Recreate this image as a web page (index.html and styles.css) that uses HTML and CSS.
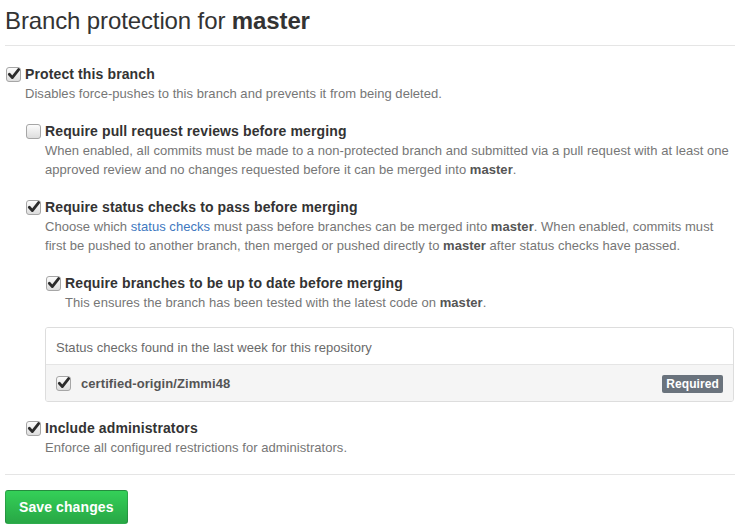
FILE: index.html
```html
<!DOCTYPE html>
<html>
<head>
<meta charset="utf-8">
<link rel="stylesheet" href="styles.css">
</head>
<body>
<div class="page">
  <h2 class="subhead">Branch protection for <strong>master</strong></h2>

  <div class="opt first">
    <span class="cb on"><svg viewBox="0 0 15 15" width="15" height="15"><defs><linearGradient id="g1" x1="0" y1="0" x2="0" y2="1"><stop offset="0" stop-color="#fdfdfd"/><stop offset="1" stop-color="#dcdcdc"/></linearGradient></defs><rect x="0.5" y="0.5" width="14" height="14" rx="2.5" fill="url(#g1)" stroke="#a6a6a6"/><path d="M3.3 7.2 L6.3 10.6 L12.6 2.6" fill="none" stroke="#2b2b2b" stroke-width="2.8" stroke-linecap="round" stroke-linejoin="round"/></svg></span>
    <span class="label">Protect this branch</span>
    <p class="note">Disables force-pushes to this branch and prevents it from being deleted.</p>
  </div>

  <div class="opt l1 g18">
    <span class="cb"><svg viewBox="0 0 15 15" width="15" height="15"><defs><linearGradient id="g2" x1="0" y1="0" x2="0" y2="1"><stop offset="0" stop-color="#fdfdfd"/><stop offset="1" stop-color="#dcdcdc"/></linearGradient></defs><rect x="0.5" y="0.5" width="14" height="14" rx="2.5" fill="url(#g2)" stroke="#a6a6a6"/></svg></span>
    <span class="label">Require pull request reviews before merging</span>
    <p class="note">When enabled, all commits must be made to a non-protected branch and submitted via a pull request with at least one approved review and no changes requested before it can be merged into <strong>master</strong>.</p>
  </div>

  <div class="opt l1 g18">
    <span class="cb on"><svg viewBox="0 0 15 15" width="15" height="15"><defs><linearGradient id="g3" x1="0" y1="0" x2="0" y2="1"><stop offset="0" stop-color="#fdfdfd"/><stop offset="1" stop-color="#dcdcdc"/></linearGradient></defs><rect x="0.5" y="0.5" width="14" height="14" rx="2.5" fill="url(#g3)" stroke="#a6a6a6"/><path d="M3.3 7.2 L6.3 10.6 L12.6 2.6" fill="none" stroke="#2b2b2b" stroke-width="2.8" stroke-linecap="round" stroke-linejoin="round"/></svg></span>
    <span class="label">Require status checks to pass before merging</span>
    <p class="note">Choose which <a href="#" class="link">status checks</a> must pass before branches can be merged into <strong>master</strong>. When enabled, commits must first be pushed to another branch, then merged or pushed directly to <strong>master</strong> after status checks have passed.</p>
  </div>

  <div class="opt l2 g18">
    <span class="cb on"><svg viewBox="0 0 15 15" width="15" height="15"><defs><linearGradient id="g4" x1="0" y1="0" x2="0" y2="1"><stop offset="0" stop-color="#fdfdfd"/><stop offset="1" stop-color="#dcdcdc"/></linearGradient></defs><rect x="0.5" y="0.5" width="14" height="14" rx="2.5" fill="url(#g4)" stroke="#a6a6a6"/><path d="M3.3 7.2 L6.3 10.6 L12.6 2.6" fill="none" stroke="#2b2b2b" stroke-width="2.8" stroke-linecap="round" stroke-linejoin="round"/></svg></span>
    <span class="label">Require branches to be up to date before merging</span>
    <p class="note">This ensures the branch has been tested with the latest code on <strong>master</strong>.</p>
  </div>

  <div class="checks">
    <div class="checks-head">Status checks found in the last week for this repository</div>
    <div class="checks-row">
      <span class="cb on"><svg viewBox="0 0 15 15" width="15" height="15"><defs><linearGradient id="g5" x1="0" y1="0" x2="0" y2="1"><stop offset="0" stop-color="#fdfdfd"/><stop offset="1" stop-color="#dcdcdc"/></linearGradient></defs><rect x="0.5" y="0.5" width="14" height="14" rx="2.5" fill="url(#g5)" stroke="#a6a6a6"/><path d="M3.3 7.2 L6.3 10.6 L12.6 2.6" fill="none" stroke="#2b2b2b" stroke-width="2.8" stroke-linecap="round" stroke-linejoin="round"/></svg></span>
      <span class="check-name">certified-origin/Zimmi48</span>
      <span class="badge">Required</span>
    </div>
  </div>

  <div class="opt l1 g16">
    <span class="cb on"><svg viewBox="0 0 15 15" width="15" height="15"><defs><linearGradient id="g6" x1="0" y1="0" x2="0" y2="1"><stop offset="0" stop-color="#fdfdfd"/><stop offset="1" stop-color="#dcdcdc"/></linearGradient></defs><rect x="0.5" y="0.5" width="14" height="14" rx="2.5" fill="url(#g6)" stroke="#a6a6a6"/><path d="M3.3 7.2 L6.3 10.6 L12.6 2.6" fill="none" stroke="#2b2b2b" stroke-width="2.8" stroke-linecap="round" stroke-linejoin="round"/></svg></span>
    <span class="label">Include administrators</span>
    <p class="note">Enforce all configured restrictions for administrators.</p>
  </div>

  <hr class="rule">

  <button class="btn-save" type="button">Save changes</button>
</div>
</body>
</html>
```

FILE: styles.css
```css
* { box-sizing: border-box; }

html, body {
  margin: 0;
  padding: 0;
  background: #fff;
}

body {
  font-family: "Liberation Sans", Arial, Helvetica, sans-serif;
  font-size: 13px;
  color: #333;
}

.page {
  width: 735px;
  padding-left: 5px;
}

.subhead {
  margin: 0;
  padding-top: 6px;
  padding-bottom: 9px;
  font-size: 24px;
  line-height: 30px;
  font-weight: normal;
  letter-spacing: -0.12px;
  color: #333;
  border-bottom: 1px solid #e5e5e5;
}

.subhead strong {
  font-weight: bold;
}

.opt {
  display: grid;
  grid-template-columns: 20px 1fr;
  grid-template-rows: 20px auto;
}

.opt.first { margin-top: 18px; }
.opt.l1 { margin-left: 20px; }
.opt.l2 { margin-left: 40px; }
.g16 { margin-top: 16px; }
.g17 { margin-top: 17px; }
.g18 { margin-top: 18px; }

.cb {
  display: flex;
  align-items: center;
  height: 20px;
  margin-left: 1px;
}

.cb svg { display: block; }

.label {
  font-size: 14px;
  font-weight: bold;
  line-height: 20px;
  letter-spacing: 0.12px;
  color: #333;
}

.note {
  grid-column: 2;
  margin: 0;
  font-size: 13px;
  line-height: 19px;
  letter-spacing: 0.04px;
  color: #767676;
}

.note strong {
  color: #555;
  font-weight: bold;
}

.link {
  color: #4078c0;
  text-decoration: none;
}

.checks {
  margin: 15px 1px 0 40px;
  border: 1px solid #ddd;
  border-radius: 3px;
  overflow: hidden;
}

.checks-head {
  padding: 10px 10px 7px;
  line-height: 19px;
  letter-spacing: 0.04px;
  color: #6a6a6a;
  background: #fff;
  border-bottom: 1px solid #e5e5e5;
}

.checks-row {
  display: flex;
  align-items: center;
  height: 36px;
  padding: 0 10px;
  background: #f5f5f5;
}

.checks-row .cb {
  margin-left: 0;
  margin-top: 1px;
  width: 25px;
}

.check-name {
  flex: 1;
  font-weight: bold;
  letter-spacing: 0.08px;
  color: #555;
  padding-top: 1px;
}

.badge {
  display: inline-block;
  height: 18px;
  line-height: 18px;
  padding: 0 4px;
  font-size: 12px;
  font-weight: bold;
  letter-spacing: 0.1px;
  color: #fff;
  background: #6a737d;
  border-radius: 2px;
  margin-top: 1px;
}

.rule {
  margin: 17px 0 15px;
  border: 0;
  border-top: 1px solid #e5e5e5;
  height: 0;
}

.btn-save {
  display: inline-block;
  margin: 0;
  padding: 7px 13px 6px;
  font-family: "Liberation Sans", Arial, Helvetica, sans-serif;
  font-size: 14px;
  font-weight: bold;
  line-height: 19px;
  letter-spacing: 0.1px;
  color: #fff;
  background: linear-gradient(to bottom, #34d058, #28a745);
  border: 1px solid rgba(27, 31, 35, 0.2);
  border-radius: 3px;
  cursor: pointer;
}
```
